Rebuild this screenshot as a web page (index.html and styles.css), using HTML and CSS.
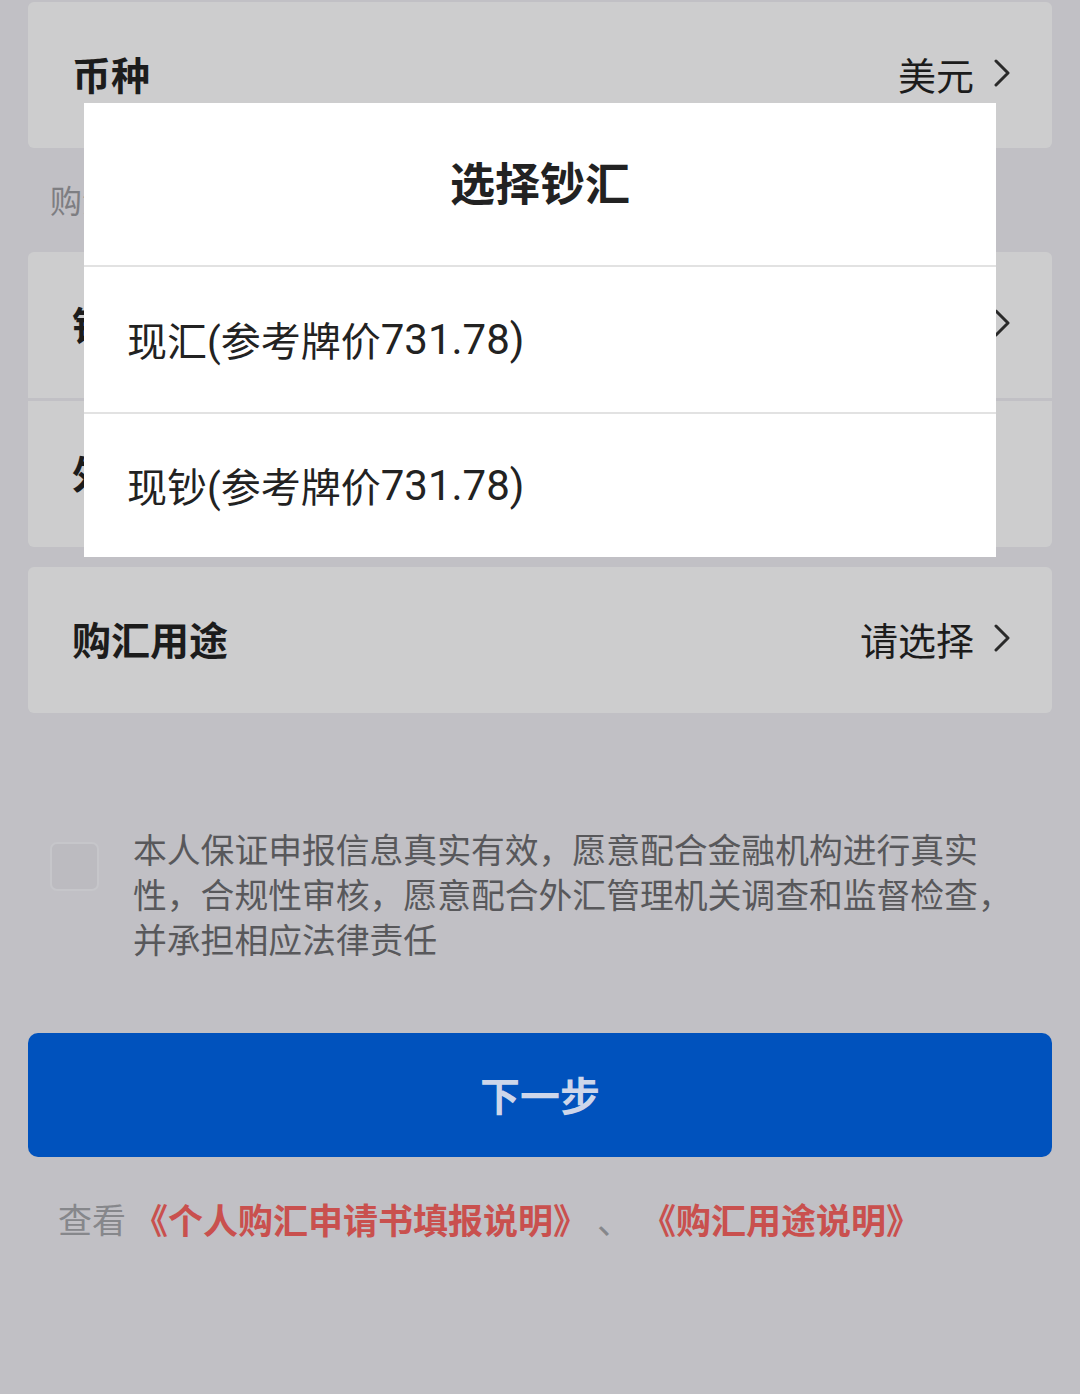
FILE: index.html
```html
<!DOCTYPE html>
<html lang="zh-CN">
<head>
<meta charset="utf-8">
<title>选择钞汇</title>
<link rel="stylesheet" href="styles.css">
</head>
<body>
<div class="page">
  <div class="card">
    <div class="row">
      <span class="label">币种</span>
      <span class="value">美元<svg class="chev" viewBox="0 0 16 28" width="16" height="28"><polyline points="2,2 14,14 2,26" fill="none" stroke="#2a2a2a" stroke-width="3" stroke-linecap="round" stroke-linejoin="round"/></svg></span>
    </div>
  </div>
  <div class="section-label">购汇信息</div>
  <div class="group">
    <div class="card top">
      <div class="row">
        <span class="label">钞汇</span>
        <span class="value"><svg class="chev" viewBox="0 0 16 28" width="16" height="28"><polyline points="2,2 14,14 2,26" fill="none" stroke="#2a2a2a" stroke-width="3" stroke-linecap="round" stroke-linejoin="round"/></svg></span>
      </div>
    </div>
    <div class="card bottom">
      <div class="row">
        <span class="label">外汇金额</span>
        <span class="value"></span>
      </div>
    </div>
  </div>
  <div class="card purpose">
    <div class="row">
      <span class="label">购汇用途</span>
      <span class="value">请选择<svg class="chev" viewBox="0 0 16 28" width="16" height="28"><polyline points="2,2 14,14 2,26" fill="none" stroke="#2a2a2a" stroke-width="3" stroke-linecap="round" stroke-linejoin="round"/></svg></span>
    </div>
  </div>
  <div class="agree">
    <span class="checkbox"></span>
    <p class="agree-text">本人保证申报信息真实有效，愿意配合金融机构进行真实性，合规性审核，愿意配合外汇管理机关调查和监督检查，并承担相应法律责任</p>
  </div>
  <div class="next">下一步</div>
  <div class="links">
    <span class="see">查看</span>
    <span class="link">《个人购汇申请书填报说明》</span>
    <span class="sep">、</span>
    <span class="link">《购汇用途说明》</span>
  </div>
</div>
<div class="modal">
  <div class="modal-title">选择钞汇</div>
  <div class="option">现汇(参考牌价<span class="num">731.78)</span></div>
  <div class="option">现钞(参考牌价<span class="num">731.78)</span></div>
</div>
</body>
</html>
```
FILE: styles.css
```css
* { box-sizing: border-box; }
html, body {
  margin: 0;
  padding: 0;
  background: #c1c0c5;
  font-family: "Noto Sans CJK SC", "Noto Sans", sans-serif;
  color: #1c1c1c;
}
.page {
  width: 1080px;
  min-height: 1394px;
  padding: 2px 28px 0;
}
.card {
  background: #cdcdce;
  border-radius: 6px;
}
.row {
  height: 146px;
  display: flex;
  align-items: center;
  justify-content: space-between;
  padding: 0 42px 4px 44px;
}
.label {
  font-size: 39px;
  font-weight: 700;
  color: #1c1c1c;
}
.value {
  display: flex;
  align-items: center;
  font-size: 38px;
  color: #1c1c1c;
}
.chev {
  margin-left: 20px;
  display: block;
}
.section-label {
  height: 104px;
  display: flex;
  align-items: center;
  padding-left: 22px;
  padding-bottom: 2px;
  font-size: 32px;
  color: #7e7e82;
}
.group {
  display: flex;
  flex-direction: column;
  gap: 3px;
}
.card.top { border-radius: 6px 6px 0 0; }
.card.bottom { border-radius: 0 0 6px 6px; }
.card.purpose { margin-top: 20px; }
.agree {
  display: flex;
  align-items: flex-start;
  margin-top: 113px;
  padding-left: 22px;
}
.checkbox {
  flex: none;
  width: 49px;
  height: 49px;
  margin-top: 16px;
  border-radius: 7px;
  background: #bcbbc0;
  border: 2px solid #c6c6ca;
}
.agree-text {
  margin: 0 0 0 34px;
  width: 890px;
  font-size: 33.8px;
  line-height: 45px;
  color: #58585b;
}
.next {
  margin-top: 72px;
  height: 124px;
  border-radius: 10px;
  background: #0052bd;
  color: #cdd6ea;
  font-size: 40px;
  font-weight: 700;
  display: flex;
  align-items: center;
  justify-content: center;
  padding-bottom: 2px;
}
.links {
  margin-top: 36px;
  padding-left: 30px;
  height: 50px;
  display: flex;
  align-items: center;
  font-size: 35px;
}
.see {
  color: #86878b;
  font-size: 34px;
  margin-right: 7px;
}
.link {
  color: #c9504e;
  font-weight: 700;
}
.sep {
  color: #86878b;
  margin: 0 9px 0 9px;
}
.modal {
  position: absolute;
  left: 84px;
  top: 103px;
  width: 912px;
  background: #ffffff;
}
.modal-title {
  height: 164px;
  display: flex;
  align-items: center;
  justify-content: center;
  padding-bottom: 6px;
  font-size: 45px;
  font-weight: 700;
  color: #222;
  border-bottom: 2px solid #e2e2e2;
}
.option {
  height: 145px;
  display: flex;
  align-items: center;
  padding-left: 43px;
  padding-bottom: 1px;
  font-family: Roboto, "Noto Sans CJK SC", sans-serif;
  font-size: 40px;
  color: #222;
}
.option .num {
  font-size: 42px;
}
.option + .option {
  border-top: 2px solid #e2e2e2;
}
```
